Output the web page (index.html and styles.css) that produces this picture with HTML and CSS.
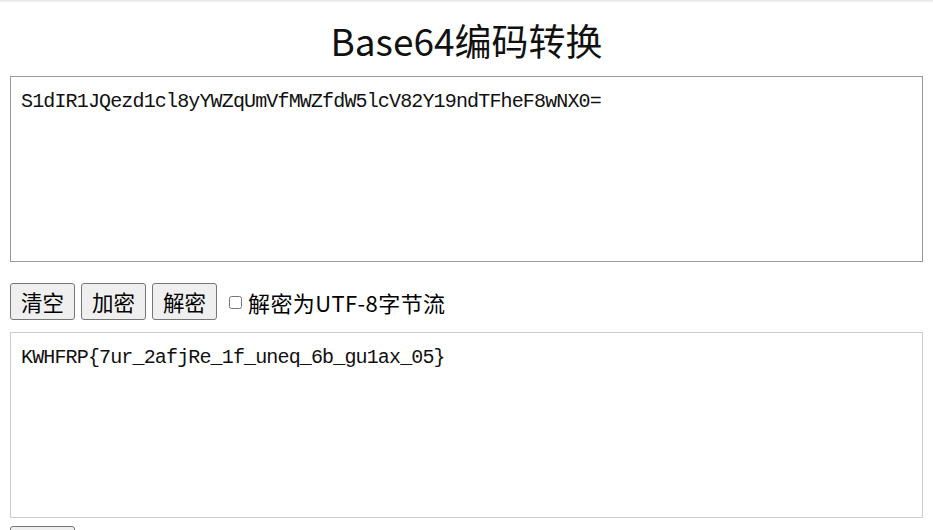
FILE: index.html
```html
<!DOCTYPE html>
<html lang="zh-CN">
<head>
<meta charset="utf-8">
<title>Base64编码转换</title>
<link rel="stylesheet" href="styles.css">
</head>
<body>
<div class="topline"></div>
<main class="page">
  <h1 class="title">Base64编码转换</h1>
  <textarea class="box box-in" spellcheck="false">S1dIR1JQezd1cl8yYWZqUmVfMWZfdW5lcV82Y19ndTFheF8wNX0=</textarea>
  <div class="controls">
    <button class="btn" type="button">清空</button>
    <button class="btn" type="button">加密</button>
    <button class="btn" type="button">解密</button>
    <label class="opt"><input class="chk" type="checkbox">解密为UTF-8字节流</label>
  </div>
  <textarea class="box box-out" readonly spellcheck="false">KWHFRP{7ur_2afjRe_1f_uneq_6b_gu1ax_05}</textarea>
  <div class="controls bottom">
    <button class="btn" type="button">复制</button>
  </div>
</main>
</body>
</html>
```
FILE: styles.css
```css
html, body {
  margin: 0;
  padding: 0;
  background: #fff;
}
body {
  font-family: "Noto Sans CJK SC", "Noto Sans", sans-serif;
  color: #000;
  overflow: hidden;
}
.topline {
  height: 3px;
  background: linear-gradient(#e4e4e4, #f6f6f6 60%, #fff);
}
.page {
  padding: 0 10px;
}
.title {
  margin: 11px 0 10px;
  font-size: 37px;
  line-height: 52px;
  font-weight: 400;
  text-align: center;
  color: #111;
}
.box {
  display: block;
  width: 100%;
  box-sizing: border-box;
  height: 186px;
  margin: 0;
  padding: 10px;
  font-family: "Liberation Mono", monospace;
  font-size: 20px;
  letter-spacing: -0.85px;
  line-height: 30px;
  color: #111;
  background: #fff;
  resize: none;
  outline: none;
}
.box-in {
  border: 1px solid #999;
}
.box-out {
  margin-top: 12px;
  border: 1px solid #ccc;
}
.controls {
  display: flex;
  align-items: center;
  gap: 6px;
  margin-top: 21px;
  height: 37px;
}
.controls.bottom {
  margin-top: 8px;
}
.btn {
  height: 37px;
  width: 65px;
  padding: 0;
  font-family: "Noto Sans CJK SC", sans-serif;
  font-size: 21.5px;
  color: #000;
  background: #efefef;
  border: 1px solid #767676;
  border-radius: 3px;
}
.opt {
  display: flex;
  align-items: center;
  font-size: 22px;
  letter-spacing: 0.4px;
}
.chk {
  width: 13px;
  height: 13px;
  margin: 2px 6px 0 6px;
}
```
